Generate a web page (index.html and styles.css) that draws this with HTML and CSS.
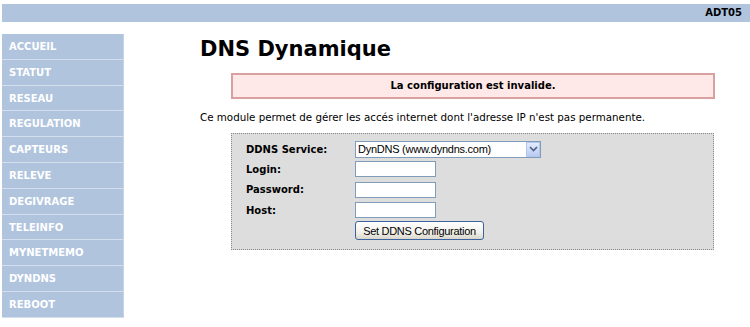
FILE: index.html
```html
<!DOCTYPE html>
<html lang="fr">
<head>
    <meta charset="UTF-8">
    <title>DNS Dynamique</title>
    <link rel="stylesheet" href="styles.css">
</head>
<body>
    <div class="topbar">ADT05</div>

    <div class="page">
        <ul class="menu">
            <li><a href="#">ACCUEIL</a></li>
            <li><a href="#">STATUT</a></li>
            <li><a href="#">RESEAU</a></li>
            <li><a href="#">REGULATION</a></li>
            <li><a href="#">CAPTEURS</a></li>
            <li><a href="#">RELEVE</a></li>
            <li><a href="#">DEGIVRAGE</a></li>
            <li><a href="#">TELEINFO</a></li>
            <li><a href="#">MYNETMEMO</a></li>
            <li><a href="#">DYNDNS</a></li>
            <li><a href="#">REBOOT</a></li>
        </ul>

        <div class="content">
            <h1>DNS Dynamique</h1>
            <div class="error">La configuration est invalide.</div>
            <p class="intro">Ce module permet de gérer les accés internet dont l'adresse IP n'est pas permanente.</p>

            <form class="ddns">
                <table>
                    <tr>
                        <th>DDNS Service:</th>
                        <td>
                            <div class="select_wrap">
                                <select>
                                    <option>DynDNS (www.dyndns.com)</option>
                                </select>
                                <span class="arrow">
                                    <svg width="9" height="6" viewBox="0 0 9 6"><path d="M1 1 L4.5 4.5 L8 1" fill="none" stroke="#4d6185" stroke-width="1.6"/></svg>
                                </span>
                            </div>
                        </td>
                    </tr>
                    <tr>
                        <th>Login:</th>
                        <td><input type="text"></td>
                    </tr>
                    <tr>
                        <th>Password:</th>
                        <td><input type="password"></td>
                    </tr>
                    <tr>
                        <th>Host:</th>
                        <td><input type="text"></td>
                    </tr>
                    <tr>
                        <th></th>
                        <td><button type="button">Set DDNS Configuration</button></td>
                    </tr>
                </table>
            </form>
        </div>
    </div>
</body>
</html>
```

FILE: styles.css
```css
body {
    font-family: 'DejaVu Sans', Verdana, sans-serif;
    font-size: 10.3px;
    margin: 4px 0 0 2px;
    background: #fff;
    color: #000;
}
.topbar {
    background-color: #b0c4de;
    height: 18px;
    line-height: 18px;
    text-align: right;
    padding-right: 8px;
    font-size: 10px;
    font-weight: bold;
}
.page {
    display: flex;
    margin-top: 12px;
}
.menu {
    list-style: none;
    margin: 0;
    padding: 0;
    width: 122px;
    flex-shrink: 0;
}
.menu li {
    background-color: #b0c4de;
    border-bottom: 1px solid #d4dfee;
    border-right: 1px solid #c4d4e8;
    height: 24.8px;
    line-height: 25px;
}
.menu a {
    color: #fff;
    font-weight: bold;
    font-size: 10px;
    text-decoration: none;
    padding-left: 7px;
    display: block;
}
.content {
    margin-left: 76px;
    width: 516px;
}
h1 {
    font-size: 21px;
    margin: 3px 0 0 0;
    line-height: 24px;
}
.error {
    background-color: #ffe8e8;
    border: 2px solid #d9a0a0;
    margin: 12px 0 0 31px;
    width: 480px;
    height: 22px;
    line-height: 22px;
    text-align: center;
    font-weight: bold;
    font-size: 10px;
}
.intro {
    margin: 10px 0 0 0;
    line-height: 16px;
}
.ddns {
    background-color: #dddddd;
    border: 1px dotted #888;
    margin: 8px 0 0 31px;
    width: 483px;
    height: 117px;
    box-sizing: border-box;
    padding: 5px 0 0 10px;
}
table {
    border-collapse: collapse;
}
th {
    text-align: left;
    font-weight: bold;
    font-size: 10px;
    width: 109px;
    padding: 0 0 0 4px;
    height: 20.3px;
}
td {
    padding: 0;
}
.select_wrap {
    position: relative;
    width: 186px;
    height: 17px;
}
select {
    appearance: none;
    -webkit-appearance: none;
    width: 186px;
    height: 17px;
    border: 1px solid #7f9db9;
    background: #fff;
    font-family: 'Liberation Sans', Tahoma, sans-serif;
    font-size: 11px;
    letter-spacing: -0.25px;
    padding: 0 0 0 2px;
    margin: 0;
    border-radius: 0;
    color: #000;
}
.arrow {
    position: absolute;
    right: 1px;
    top: 1px;
    width: 14px;
    height: 15px;
    background: linear-gradient(#e3ebfd, #b9cbf3);
    border: 1px solid #b6c7ef;
    box-sizing: border-box;
    display: flex;
    align-items: center;
    justify-content: center;
}
input {
    width: 81px;
    height: 16px;
    border: 1px solid #7f9db9;
    background: #fff;
    padding: 0;
    margin: 0;
    box-sizing: border-box;
    display: block;
}
button {
    font-family: 'Liberation Sans', Tahoma, sans-serif;
    font-size: 11px;
    letter-spacing: -0.3px;
    width: 129px;
    height: 19px;
    padding: 0;
    margin-top: 1px;
    border: 1px solid #3b63a0;
    border-radius: 3px;
    background: linear-gradient(#ffffff, #f2f1ec 60%, #d9d6cc);
    color: #000;
    cursor: pointer;
}
```
